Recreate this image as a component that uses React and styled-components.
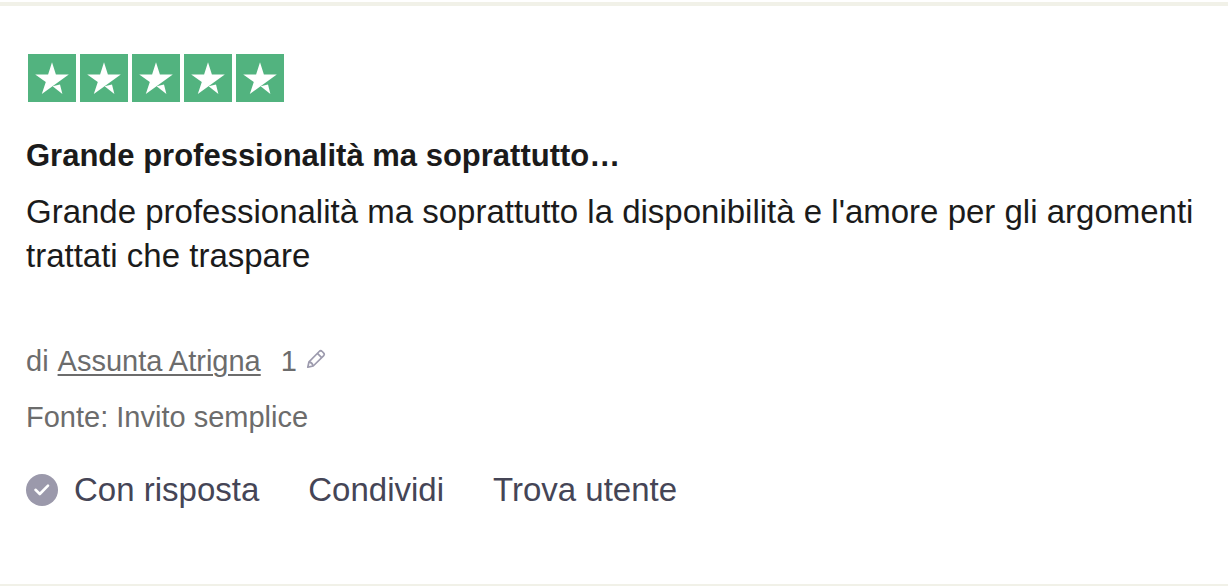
import styled, { createGlobalStyle } from "styled-components";

const GlobalStyle = createGlobalStyle`
  * {
    box-sizing: border-box;
  }
  body {
    margin: 0;
    background: #ffffff;
    font-family: "Liberation Sans", Arial, sans-serif;
  }
`;
const Page = styled.main`
  padding-top: 2px;
`;
const Card = styled.article`
  padding: 48px 24px 72px 26px;
  border-top: 4px solid #f1f1e8;
  border-bottom: 2px solid #f1f1e8;
`;
const Stars = styled.div`
  display: flex;
  gap: 4px;
  padding-left: 2px;
  margin-bottom: 32px;
`;
const StarBox = styled.svg`
  display: block;
  width: 48px;
  height: 48px;
  background: #52b37f;
`;
const Title = styled.h2`
  margin: 0 0 12px;
  font-size: 31px;
  line-height: 44px;
  font-weight: 700;
  color: #1b1b1b;
`;
const Text = styled.p`
  margin: 0 0 63px;
  font-size: 33px;
  line-height: 44px;
  color: #1b1b1b;
`;
const Meta = styled.div`
  display: flex;
  align-items: center;
  margin-bottom: 16px;
  font-size: 29px;
  line-height: 40px;
  color: #6c6c6c;
`;
const Author = styled.a`
  margin: 0 20px 0 9px;
  color: inherit;
  text-underline-offset: 3px;
  text-decoration-thickness: 2px;
`;
const EditButton = styled.button`
  display: flex;
  margin-left: 9px;
  padding: 0 0 4px;
  border: 0;
  background: none;
  cursor: pointer;
`;
const Actions = styled.div`
  display: flex;
  align-items: center;
  gap: 49px;
  margin-top: 31px;
`;
const Action = styled.button`
  display: flex;
  align-items: center;
  gap: 16px;
  padding: 0;
  border: 0;
  background: none;
  font-family: inherit;
  font-size: 33px;
  line-height: 44px;
  color: #454556;
  cursor: pointer;
`;

const Star = () => (
  <StarBox viewBox="0 0 48 48" aria-hidden="true">
    <path
      fill="#fff"
      d="M24 8.2L27.9 20.5H40.8L13.8 40L17.8 28L7.2 20.5H20.1Z"
    />
    <path fill="#fff" d="M24.6 32.2L32 30.6L34.4 40Z" />
  </StarBox>
);

const Pencil = () => (
  <svg
    width="20"
    height="20"
    viewBox="0 0 20 20"
    fill="none"
    stroke="#9d9bae"
    strokeWidth="1.7"
    strokeLinejoin="round"
  >
    <path d="M1.8 18.2L3 12.8L13.2 2.5Q14.7 1 16.2 2.5L17.5 3.8Q19 5.3 17.5 6.8L7.2 17Z" />
    <path d="M11.4 4.3L15.7 8.6M3 12.8Q6.4 13.4 7.2 17" />
  </svg>
);

const Check = () => (
  <svg width="32" height="32" viewBox="0 0 32 32" fill="none">
    <circle cx="16" cy="16" r="16" fill="#9b99ab" />
    <path
      d="M9.5 15.8L13.8 20L22 11.6"
      stroke="#fff"
      strokeWidth="2.6"
      strokeLinecap="round"
      strokeLinejoin="round"
    />
  </svg>
);

function App() {
  return (
    <>
      <GlobalStyle />
      <Page>
        <Card>
          <Stars role="img" aria-label="5 stelle su 5">
            {[1, 2, 3, 4, 5].map((n) => (
              <Star key={n} />
            ))}
          </Stars>
          <Title>Grande professionalità ma soprattutto…</Title>
          <Text>
            Grande professionalità ma soprattutto la disponibilità e l'amore per
            gli argomenti trattati che traspare
          </Text>
          <Meta>
            di <Author href="#utente">Assunta Atrigna</Author> 1
            <EditButton type="button" aria-label="Modifica">
              <Pencil />
            </EditButton>
          </Meta>
          <Meta>Fonte: Invito semplice</Meta>
          <Actions>
            <Action type="button">
              <Check />
              Con risposta
            </Action>
            <Action type="button">Condividi</Action>
            <Action type="button">Trova utente</Action>
          </Actions>
        </Card>
      </Page>
    </>
  );
}

export default App;
